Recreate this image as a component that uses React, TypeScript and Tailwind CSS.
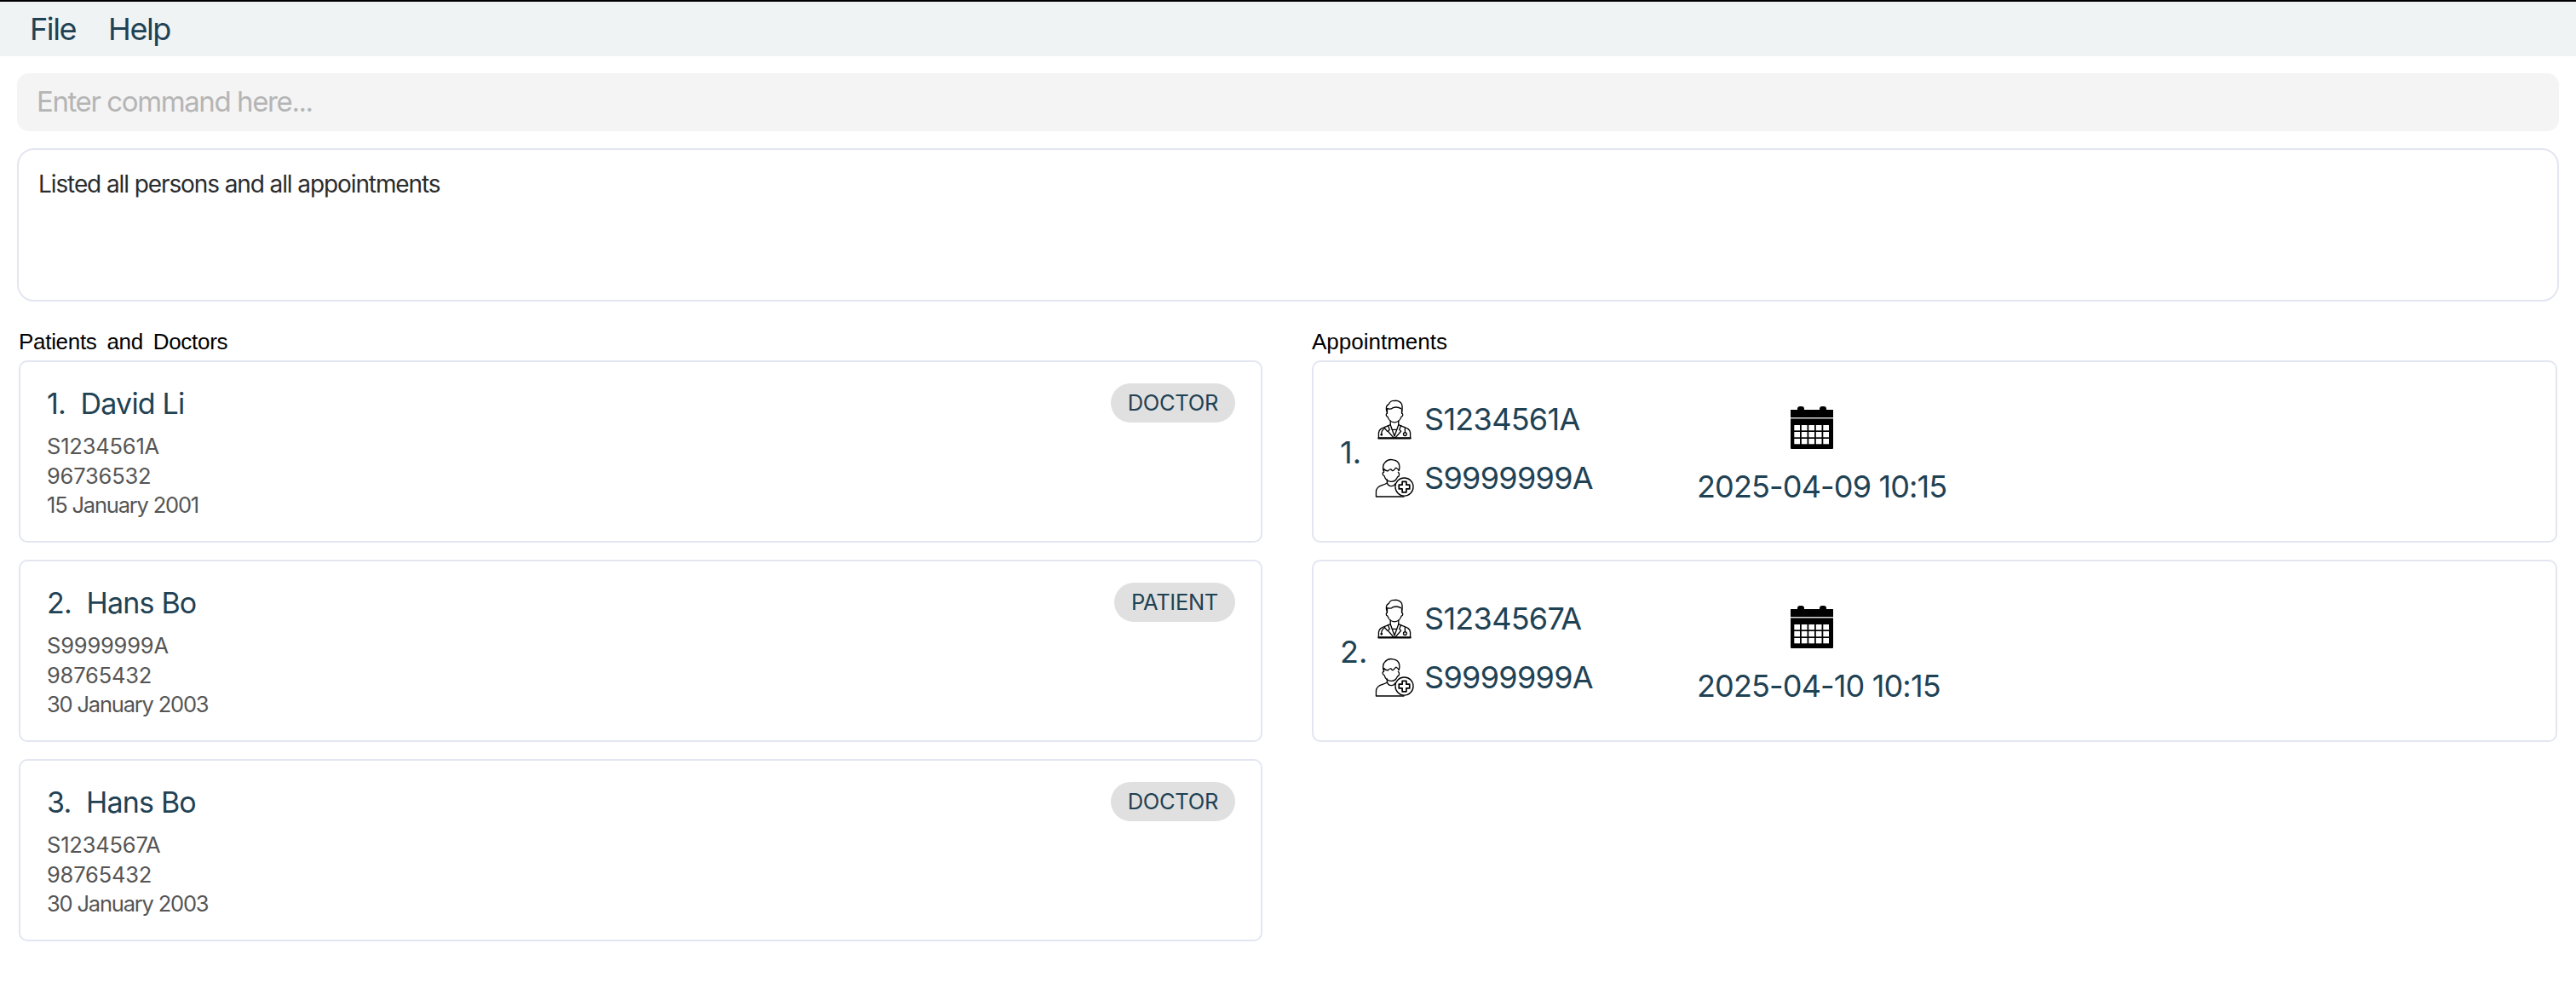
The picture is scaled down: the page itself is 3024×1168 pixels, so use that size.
const persons = [
  { name: "David Li", ic: "S1234561A", phone: "96736532", dob: "15 January 2001", role: "DOCTOR" },
  { name: "Hans Bo", ic: "S9999999A", phone: "98765432", dob: "30 January 2003", role: "PATIENT" },
  { name: "Hans Bo", ic: "S1234567A", phone: "98765432", dob: "30 January 2003", role: "DOCTOR" },
];

const appointments = [
  { doctor: "S1234561A", patient: "S9999999A", time: "2025-04-09 10:15" },
  { doctor: "S1234567A", patient: "S9999999A", time: "2025-04-10 10:15" },
];

function DoctorIcon() {
  return (
    <svg viewBox="0 0 42 50" className="h-[48px] w-[40px]" fill="none" stroke="#000" strokeWidth="1.4" strokeLinejoin="round" strokeLinecap="round">
      <path d="M12 17c-1-2-1.500-4-1-7 .5-2 2-3 3-3.500C15 4 18 2 21 2.500c2-1 6 .5 8 2.500 2 2 2 6 1 12" />
      <path d="M12 12c3 1 5 1 7-1 3-1 7-1 10 1" />
      <path d="M12 13v5c-1.500 0-2 3 .5 4 1 3 4 7 8.500 7s7.500-4 8.500-7c2.500-1 2-4 .5-4v-5" />
      <path d="M16 27v5l-5 2c-5 2-9 3-9.500 8v6.500h39V42c-.5-5-4.500-6-9.500-8l-5-2v-5" />
      <path d="M16 32l5 14 5-14M13 33l2 5-2 2 7 8M29 33l-2 5 2 2-7 8M18 38h6" />
      <path d="M9 36c-3 2-4 4-4 7M5 43c-1 0-1 2 0 2s1-2 0-2M9 36c1 2 3 3 3 4" />
      <path d="M34 36v5" />
      <circle cx="34" cy="43.500" r="2" />
      <path d="M1.500 48.500h39" strokeWidth="2.400" />
    </svg>
  );
}

function PatientIcon() {
  return (
    <svg viewBox="0 0 48 48" className="h-[46px] w-[46px]" fill="none" stroke="#000" strokeWidth="1.4" strokeLinejoin="round" strokeLinecap="round">
      <path d="M10.500 15c-1-4-.5-8 2-10 2-2.500 6-4 10-3 4 .5 7 3.500 7.500 7 .5 2 0 4-.5 6" />
      <path d="M11 13c2 2 4 3 5.500 2 1-1 2-2 3-1.500 1 .5 2 2.500 3 1.500 1.500-1 3-4 4-3 1 .5 2 1.500 3 3" />
      <path d="M11 13v4c-2 0-2 4 .5 4.500 1 3.500 4 7 8.500 7s6-2 8-6c2 0 2.500-4 .5-5.500" />
      <path d="M15 26v4c-.5 1-2 1.500-5 2.500-6 2-8.500 4-8.500 9v5.500h34" />
      <path d="M15 30c1 3 3 4 5 4s4-1 5-3" />
      <circle cx="36" cy="35" r="11" fill="#fff" />
      <path d="M33.500 28.500h5v4h4v5h-4v4h-5v-4h-4v-5h4z" strokeWidth="1.800" />
    </svg>
  );
}

function CalendarIcon() {
  const cells = Array.from({ length: 15 });
  return (
    <svg viewBox="0 0 50 50" className="h-[50px] w-[50px]" fill="#000">
      <path d="M0 4h8V3a3 3 0 0 1 3-3h2a3 3 0 0 1 3 3v1h18V3a3 3 0 0 1 3-3h2a3 3 0 0 1 3 3v1h8v12H0z" />
      <path d="M0 15h50v34a1 1 0 0 1-1 1H1a1 1 0 0 1-1-1z" />
      <path d="M0 13h50v1.500H0z" fill="#d8d8d8" />
      {cells.map((_, i) => (
        <rect key={i} x={4.300 + (i % 5) * 8.500} y={22 + Math.floor(i / 5) * 8} width="6.700" height="6.300" fill="#fff" />
      ))}
    </svg>
  );
}

function PersonCard({ index, name, ic, phone, dob, role }: { index: number; name: string; ic: string; phone: string; dob: string; role: string }) {
  return (
    <div className="flex h-[214px] items-start justify-between rounded-[10px] border-2 border-[#e3e6f1] bg-white pl-[31px] pr-[30px] pt-[25px]">
      <div>
        <p className="whitespace-pre text-[34px] leading-[47px] tracking-[-0.8px] text-[#1f4254]">{index}.  {name}</p>
        <div className="mt-[10px] text-[25.500px] leading-[34.500px] tracking-[-0.2px] text-[#555]">
          <p>{ic}</p>
          <p>{phone}</p>
          <p className="tracking-[-1.2px]">{dob}</p>
        </div>
      </div>
      <span className="rounded-[24px] bg-[#e0e0e0] px-[20px] text-[25.500px] leading-[46px] tracking-[-0.3px] text-[#1f4254]">{role}</span>
    </div>
  );
}

function AppointmentCard({ index, doctor, patient, time }: { index: number; doctor: string; patient: string; time: string }) {
  return (
    <div className="flex h-[214px] items-center rounded-[10px] border-2 border-[#e3e6f1] bg-white pl-[31px]">
      <span className="mt-[2px] w-[41px] text-[36px] text-[#1f4254]">{index}.</span>
      <div className="mb-[8px] flex w-[378px] flex-col gap-[21px] text-[36px] leading-[48px] tracking-[-0.7px] text-[#1f4254]">
        <div className="flex items-center gap-[15px] pl-[3px]">
          <DoctorIcon />
          <span>{doctor}</span>
        </div>
        <div className="flex items-center gap-[12px]">
          <PatientIcon />
          <span>{patient}</span>
        </div>
      </div>
      <div className="mt-[12px] flex flex-col items-start text-[36px] leading-[48px] tracking-[-0.85px] text-[#1f4254]">
        <div className="ml-[110px]">
          <CalendarIcon />
        </div>
        <span className="mt-[20px] whitespace-nowrap">{time}</span>
      </div>
    </div>
  );
}

export default function App() {
  return (
    <div className="flex min-h-[1168px] flex-col bg-white font-['Inter',sans-serif]">
      <div className="flex h-[66px] items-center gap-[38px] border-t-2 border-black bg-[#eff3f4] pl-[35px] text-[36px] tracking-[-1.4px] text-[#1f4254]">
        <span>File</span>
        <span>Help</span>
      </div>

      <div className="mx-[20px] mt-[20px] flex h-[68px] items-center rounded-[14px] bg-[#f4f4f4] pl-[23px] text-[33px] tracking-[-1.4px] text-[#b5b5b5]">
        Enter command here...
      </div>

      <div className="mx-[20px] mt-[20px] h-[180px] rounded-[20px] border-2 border-[#e3e6f1] pl-[23px] pt-[20px] text-[28px] leading-[40px] tracking-[-1.1px] text-[#2b2b2b]">
        Listed all persons and all appointments
      </div>

      <div className="mt-[29px] grid grid-cols-[1460px_1462px] gap-x-[58px] pl-[22px]">
        <section>
          <h2 className="whitespace-pre pb-[4px] font-['Liberation_Sans',sans-serif] text-[26px] leading-[36px] tracking-[-0.3px] text-black [word-spacing:-1px]">Patients  and  Doctors</h2>
          <div className="flex flex-col gap-[20px]">
            {persons.map((p, i) => (
              <PersonCard key={i} index={i + 1} {...p} />
            ))}
          </div>
        </section>
        <section>
          <h2 className="pb-[4px] font-['Liberation_Sans',sans-serif] text-[26px] leading-[36px] text-black">Appointments</h2>
          <div className="flex flex-col gap-[20px]">
            {appointments.map((a, i) => (
              <AppointmentCard key={i} index={i + 1} {...a} />
            ))}
          </div>
        </section>
      </div>
    </div>
  );
}
